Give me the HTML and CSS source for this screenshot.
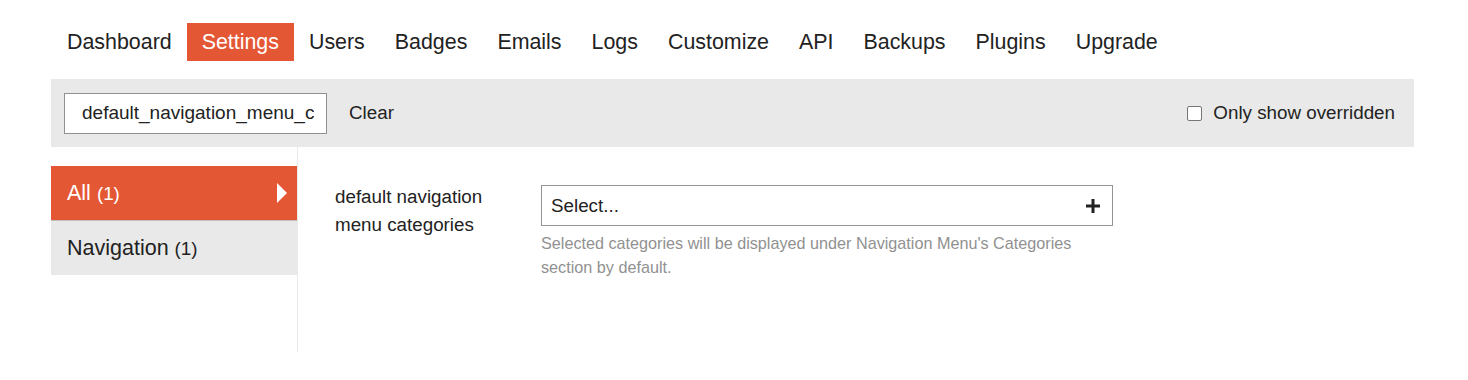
FILE: index.html
```html
<!DOCTYPE html>
<html>
<head>
<meta charset="utf-8">
<link rel="stylesheet" href="styles.css">
</head>
<body>
<div class="wrap">
  <ul class="nav">
    <li><a>Dashboard</a></li>
    <li class="active"><a>Settings</a></li>
    <li><a>Users</a></li>
    <li><a>Badges</a></li>
    <li><a>Emails</a></li>
    <li><a>Logs</a></li>
    <li><a>Customize</a></li>
    <li><a>API</a></li>
    <li><a>Backups</a></li>
    <li><a>Plugins</a></li>
    <li><a>Upgrade</a></li>
  </ul>
  <div class="filter">
    <input class="search" type="text" value="default_navigation_menu_categories">
    <span class="clear">Clear</span>
    <label class="overridden"><span class="cb"></span>Only show overridden</label>
  </div>
  <div class="main">
    <div class="side">
      <div class="cat active"><span>All <small>(1)</small></span><span class="tri"></span></div>
      <div class="cat"><span>Navigation <small>(1)</small></span></div>
    </div>
    <div class="content">
      <div class="setting">
        <div class="label">default navigation menu categories</div>
        <div class="value">
          <div class="select"><span>Select...</span>
            <svg class="plus" width="14" height="14" viewBox="0 0 14 14"><path d="M5.5 0h3v5.5H14v3H8.5V14h-3V8.5H0v-3h5.5z" fill="#222"/></svg>
          </div>
          <div class="desc">Selected categories will be displayed under Navigation Menu's Categories section by default.</div>
        </div>
      </div>
    </div>
  </div>
</div>
</body>
</html>
```
FILE: styles.css
```css
* { box-sizing: border-box; }
body { margin: 0; background: #fff; font-family: "Liberation Sans", Arial, sans-serif; color: #222; font-size: 18.8px; }
.wrap { margin-left: 51px; width: 1363px; }
.nav { list-style: none; margin: 23px 0 0 1px; padding: 0; display: flex; }
.nav li a { display: block; height: 38px; line-height: 38px; padding: 0 15px; font-size: 21.4px; color: #222; }
.nav li.active a { background: #e45735; color: #fff; }
.filter { margin-top: 18px; height: 68px; background: #e9e9e9; display: flex; align-items: center; padding: 0 19px 0 13px; }
.search { width: 263px; height: 41px; margin: 0; background: #fff; border: 1px solid #919191; border-radius: 0; padding: 0 12px 0 17px; font: inherit; font-size: 19px; color: #222; outline: none; }
.clear { margin-left: 22px; }
.overridden { margin-left: auto; display: flex; align-items: center; }
.cb { width: 15px; height: 15px; border: 1px solid #767676; border-radius: 2px; background: #fff; margin-right: 11px; margin-top: 1px; flex: none; }
.main { display: flex; }
.side { width: 247px; border-right: 1px solid #e9e9e9; height: 205px; padding-top: 19px; }
.cat { height: 54px; display: flex; align-items: center; justify-content: space-between; padding: 0 10px 0 16px; font-size: 21.5px; background: #e9e9e9; }
.cat small { font-size: 18.8px; }
.cat.active { background: #e45735; color: #fff; border-bottom: 1px solid #c0c0c0; height: 55px; }
.tri { width: 0; height: 0; border-top: 10px solid transparent; border-bottom: 10px solid transparent; border-left: 10px solid #fff; }
.content { flex: 1; padding: 38px 0 0 37px; }
.setting { display: flex; }
.label { width: 206px; line-height: 28px; margin-top: -2px; padding-right: 20px; }
.select { width: 572px; height: 41px; border: 1px solid #949494; display: flex; align-items: center; justify-content: space-between; padding: 0 12px 0 9px; }
.desc { width: 560px; margin-top: 5px; color: #919191; font-size: 16.2px; line-height: 24px; }
```
